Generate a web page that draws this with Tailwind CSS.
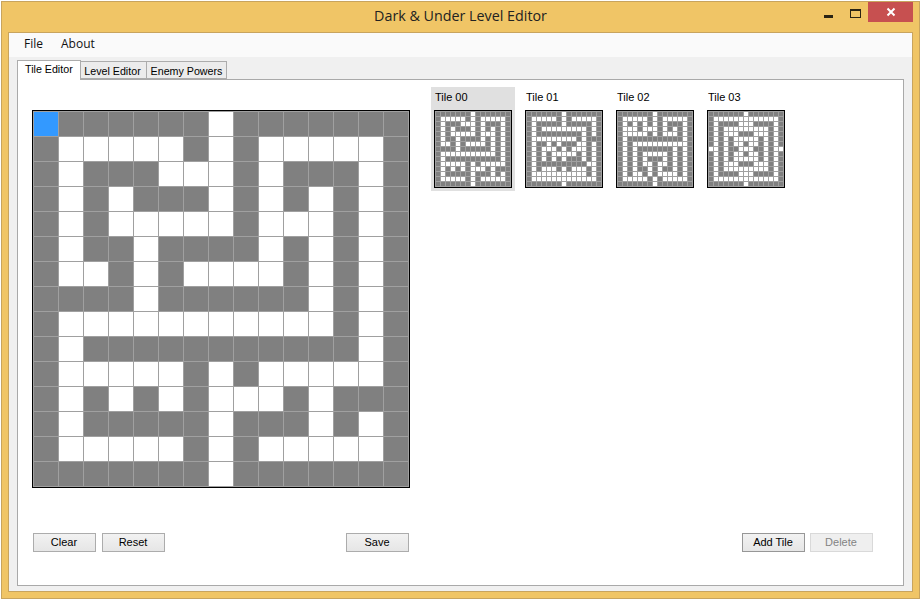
<!DOCTYPE html>
<html lang="en">
<head>
  <meta charset="UTF-8">
  <title>Dark &amp; Under Level Editor</title>
  <script src="https://cdn.jsdelivr.net/npm/@tailwindcss/browser@4"></script>
</head>
<body class="bg-white overflow-hidden font-['Liberation_Sans',sans-serif] text-[11px] text-black">
  <div class="w-[919px] h-[598px] mt-px ml-px flex flex-col border border-[#c8a45e] bg-[#f0c566]">
    <!-- title bar -->
    <div class="h-[30px] shrink-0 flex items-start relative">
      <div class="w-full text-center pt-1 text-[14.3px] leading-5 text-[#222] font-['Open_Sans',sans-serif]">Dark &amp; Under Level Editor</div>
      <div class="absolute left-[822px] top-[13px] w-[9px] h-[3px] bg-[#2a2414]"></div>
      <div class="absolute left-[848px] top-[7px] w-[11px] h-[9px] border border-t-2 border-[#2a2414]"></div>
      <div class="absolute left-[866px] top-0 w-[45px] h-5 bg-[#c75050] flex items-center justify-center">
        <svg width="10" height="10" viewBox="0 0 10 10"><path d="M1.5 1.5l7 7M8.5 1.5l-7 7" stroke="#fff" stroke-width="2"/></svg>
      </div>
    </div>
    <!-- client area -->
    <div class="mx-[6px] mb-[6px] flex-1 min-h-0 flex flex-col border border-[#c8a45e] bg-[#f0f0f0]">
      <div class="h-6 shrink-0 flex items-center bg-[#fafafa] pl-[15px] gap-[18px] text-[12px] font-['Open_Sans',sans-serif] text-[#111]">
        <span class="-mt-0.5">File</span>
        <span class="-mt-0.5">About</span>
      </div>
      <!-- tabs -->
      <div class="h-[22px] shrink-0 flex items-end pl-2 leading-none text-[10.7px]">
        <div class="w-[64px] h-[20px] bg-white border border-b-0 border-[#acacac] pt-[3px] pl-[7px] relative top-px z-10">Tile Editor</div>
        <div class="w-[67px] h-[18px] -ml-px bg-[#ececec] border border-[#acacac] pt-1 pr-[2px] text-center">Level Editor</div>
        <div class="w-[81px] h-[18px] -ml-px bg-[#ececec] border border-[#acacac] pt-1 text-center">Enemy Powers</div>
      </div>
      <!-- tab page -->
      <div class="mx-2 mb-[5px] flex-1 min-h-0 flex flex-col bg-white border border-[#a9a9a9]">
        <div class="flex items-start">
          <div id="grid" class="ml-[14px] mt-[30px] w-[378px] h-[378px] p-px grid grid-cols-[repeat(15,24px)] grid-rows-[repeat(15,24px)] gap-px bg-[#a0a0a0] border border-black"></div>
          <div id="tiles" class="ml-[21px] mt-[7px] flex gap-[7px]"></div>
        </div>
        <div class="mt-auto mb-[33px] pl-[15px] pr-[30px] flex">
          <div class="w-[376px] flex">
            <button class="w-[63px] h-[19px] pr-px border border-[#acacac] bg-linear-to-b from-[#f2f2f2] to-[#e6e6e6]">Clear</button>
            <button class="ml-[6px] w-[63px] h-[19px] pr-px border border-[#acacac] bg-linear-to-b from-[#f2f2f2] to-[#e6e6e6]">Reset</button>
            <button class="ml-auto w-[63px] h-[19px] pr-px border border-[#acacac] bg-linear-to-b from-[#f2f2f2] to-[#e6e6e6]">Save</button>
          </div>
          <div class="ml-auto flex gap-[5px]">
            <button class="w-[63px] h-[19px] pr-px border border-[#979797] bg-linear-to-b from-[#f2f2f2] to-[#e6e6e6]">Add Tile</button>
            <button class="w-[63px] h-[19px] pr-px border border-[#d9d9d9] bg-[#efefef] text-[#838383]">Delete</button>
          </div>
        </div>
      </div>
    </div>
  </div>

  <script>
    // # = floor (white), . = wall (grey)
    const tile00 = [
      '.......#.......',
      '.#####.#.#####.',
      '.#...###.#...#.',
      '.#.#...#.#.#.#.',
      '.#.#####.###.#.',
      '.#..#....#.#.#.',
      '.##.#.####.#.#.',
      '....#......#.#.',
      '.###########.#.',
      '.#...........#.',
      '.#####.#.#####.',
      '.#.#.#.###.#...',
      '.#.....#...#.#.',
      '.#####.#.#####.',
      '.......#.......'
    ];
    const tile01 = [
      '.......#.......',
      '.#####.#.#####.',
      '.#.....#.....#.',
      '.#.#########.#.',
      '.#.........#.#.',
      '.#########.#...',
      '.#..#.#...##.#.',
      '.#.###.#.###.#.',
      '.#.#.#####.#.#.',
      '.#.#.#.#...#.#.',
      '.#..........##.',
      '.#.###.#.###.#.',
      '.###########.#.',
      '.#############.',
      '.......#.......'
    ];
    const tile02 = [
      '.......#.......',
      '.#####.#.#####.',
      '.#.#.#.#.#...#.',
      '.###.###.#.#.#.',
      '.#####.#.###.#.',
      '.#...........#.',
      '.#.###########.',
      '.#.#.......#.#.',
      '.#.#.#####.#.#.',
      '.#.#.#...#.#.#.',
      '.#.#.##.##.#.#.',
      '.#.#..#.#..#.#.',
      '.#.##.#.####.#.',
      '.#####.#.#####.',
      '.......#.......'
    ];
    const tile03 = [
      '.......#.......',
      '.#############.',
      '.#....###....#.',
      '.#.#########.#.',
      '.#.###...###.#.',
      '.#.#.#####.#.#.',
      '.#.#.##.##.#.#.',
      '##.#..###..#.##',
      '.#.#.##.##.#.#.',
      '.#.#.#####.#.#.',
      '.#.###...###.#.',
      '.#.#########.#.',
      '.#....###....#.',
      '.#############.',
      '.......#.......'
    ];

    const grid = document.getElementById('grid');
    tile00.forEach((row, r) => {
      [...row].forEach((c, i) => {
        const cell = document.createElement('div');
        if (r === 0 && i === 0) cell.className = 'bg-[#3399ff]';
        else cell.className = c === '#' ? 'bg-white' : 'bg-[#808080]';
        grid.appendChild(cell);
      });
    });

    const tiles = document.getElementById('tiles');
    [tile00, tile01, tile02, tile03].forEach((rows, n) => {
      const item = document.createElement('div');
      item.className = n === 0 ? 'w-[84px] h-[104px] px-[3px] bg-[#e0e0e0]' : 'w-[84px] h-[104px] px-[3px]';
      const label = document.createElement('div');
      label.className = 'h-[23px] pl-px pt-[5px] leading-none text-[11px]';
      label.textContent = 'Tile 0' + n;
      item.appendChild(label);
      const thumb = document.createElement('div');
      thumb.className = 'w-[78px] h-[78px] p-px grid grid-cols-[repeat(15,4px)] grid-rows-[repeat(15,4px)] gap-px bg-[#a0a0a0] border border-black';
      rows.forEach(row => {
        [...row].forEach(c => {
          const cell = document.createElement('div');
          cell.className = c === '#' ? 'bg-white' : 'bg-[#808080]';
          thumb.appendChild(cell);
        });
      });
      item.appendChild(thumb);
      tiles.appendChild(item);
    });
  </script>
</body>
</html>
